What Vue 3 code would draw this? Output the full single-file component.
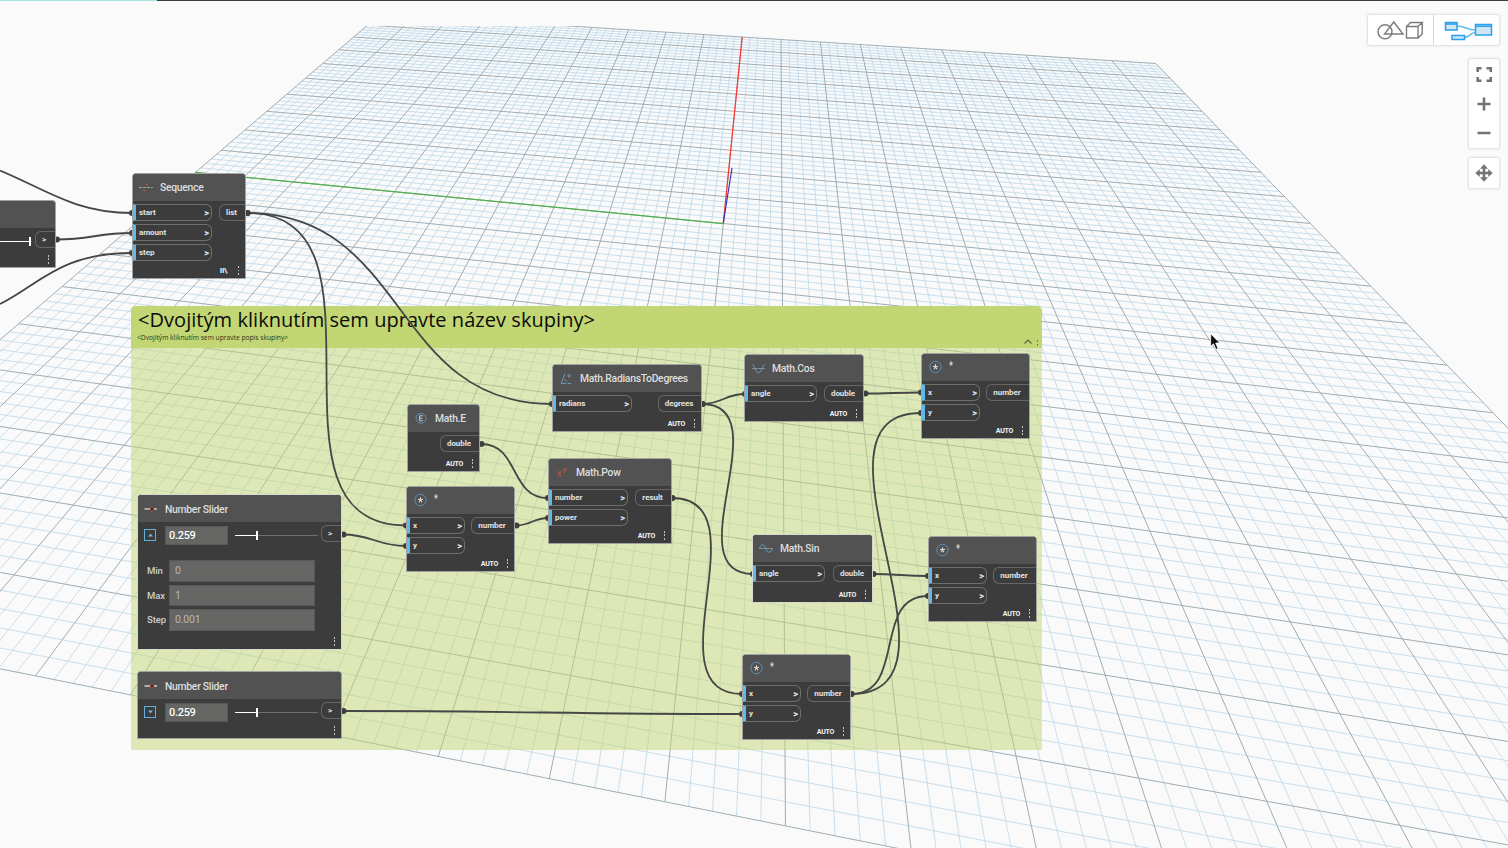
<script setup>
// Camera matrix mapping the ground plane (-10..10 on both axes) to the screen
const cam = [50.8021, 39.90417, 723.3215, 3.353963, -16.75177, 223.5305, -0.01017834, 0.05122718]
function project(u, v) {
  const w = cam[6] * u + cam[7] * v + 1
  return [(cam[0] * u + cam[1] * v + cam[2]) / w, (cam[3] * u + cam[4] * v + cam[5]) / w]
}
function seg(u1, v1, u2, v2) {
  const a = project(u1, v1)
  const b = project(u2, v2)
  return `M${a[0].toFixed(2)} ${a[1].toFixed(2)}L${b[0].toFixed(2)} ${b[1].toFixed(2)}`
}
let minor = ''
let major = ''
for (let i = -50; i <= 50; i++) {
  const t = i / 5
  const d = seg(t, -10, t, 10) + seg(-10, t, 10, t)
  if (i % 5 === 0) major += d
  else minor += d
}

const links = [
  [247, 213, 406, 525.5], [247, 213, 552, 404], [702, 404, 745, 394], [702, 404, 753, 574],
  [481, 444, 548, 498], [516, 525.5, 548, 518], [672, 498, 742, 694], [343, 534.5, 406, 546],
  [343, 711, 742, 714], [865, 393.5, 921, 392.5], [873, 574, 928, 576], [851, 694, 928, 596],
  [851, 694, 921, 413], [56.5, 239.5, 132, 233],
]
function wire([x1, y1, x2, y2]) {
  const k = 0.45 * Math.hypot(x2 - x1, y2 - y1)
  return `M${x1} ${y1}C${x1 + k} ${y1} ${x2 - k} ${y2} ${x2} ${y2}`
}
const wires = [...links.map(wire), 'M0 170.5C45 189 75 213 132 213', 'M0 304C40 284 60 253 132 253']
const plugs = [...links.flatMap(([a, b, c, d]) => [[a + 0.5, b], [c, d]]), [132, 213], [132, 253]]

const nodes = [
  { x: 132, y: 173, w: 114, h: 106, title: 'Sequence', icon: 'seq', ins: ['start', 'amount', 'step'], iw: 79, out: 'list', ow: 26, mode: 'II\\' },
  { x: 407, y: 404, w: 73, h: 68, title: 'Math.E', icon: 'e', ins: [], iw: 0, out: 'double', ow: 39, mode: 'AUTO' },
  { x: 406, y: 486, w: 109, h: 86, title: '*', icon: 'star', ins: ['x', 'y'], iw: 58, out: 'number', ow: 43, mode: 'AUTO' },
  { x: 552, y: 364, w: 150, h: 68, title: 'Math.RadiansToDegrees', icon: 'deg', ins: ['radians'], iw: 79, out: 'degrees', ow: 43, mode: 'AUTO' },
  { x: 744, y: 354, w: 120, h: 68, title: 'Math.Cos', icon: 'cos', ins: ['angle'], iw: 72, out: 'double', ow: 39, mode: 'AUTO' },
  { x: 548, y: 458, w: 124, h: 86, title: 'Math.Pow', icon: 'pow', ins: ['number', 'power'], iw: 79, out: 'result', ow: 36, mode: 'AUTO' },
  { x: 921, y: 353, w: 109, h: 86, title: '*', icon: 'star', ins: ['x', 'y'], iw: 58, out: 'number', ow: 43, mode: 'AUTO' },
  { x: 752, y: 534, w: 121, h: 69, title: 'Math.Sin', icon: 'sin', ins: ['angle'], iw: 72, out: 'double', ow: 39, mode: 'AUTO', bright: true },
  { x: 928, y: 536, w: 109, h: 86, title: '*', icon: 'star', ins: ['x', 'y'], iw: 58, out: 'number', ow: 43, mode: 'AUTO' },
  { x: 742, y: 654, w: 109, h: 86, title: '*', icon: 'star', ins: ['x', 'y'], iw: 58, out: 'number', ow: 43, mode: 'AUTO' },
]
const sliders = [
  { x: -149, y: 200, h: 68, full: true },
  { x: 137, y: 494, h: 156, open: true, bright: true },
  { x: 137, y: 671, h: 68 },
]
const ranges = [['Min', '0'], ['Max', '1'], ['Step', '0.001']]
const place = (n) => ({ left: n.x + 'px', top: n.y + 'px', width: (n.w || 205) + 'px', height: n.h + 'px' })
</script>

<template>
  <div class="workspace">
    <svg class="layer" width="1508" height="848">
      <defs><clipPath id="far"><rect x="0" y="26" width="1508" height="822" /></clipPath></defs>
      <g clip-path="url(#far)" fill="none">
        <path :d="minor" class="minor" />
        <path :d="major" class="major" />
      </g>
      <path :d="seg(0, 0, -10, 0)" stroke="#4fb04c" stroke-width="1.2" />
      <path :d="seg(0, 0, 0, 10)" stroke="#ff3232" stroke-width="1.2" />
      <path d="M723.3 223L732 168" stroke="#2a2ab8" stroke-width="1.1" />
    </svg>

    <section class="group">
      <header class="group-head">
        <div class="group-title">&lt;Dvojitým kliknutím sem upravte název skupiny&gt;</div>
        <div class="group-desc">&lt;Dvojitým kliknutím sem upravte popis skupiny&gt;</div>
        <svg class="group-tools" width="18" height="10" viewBox="0 0 18 10">
          <path d="M.5 6.500L4 3L7.500 6.500" fill="none" stroke="#5c6840" stroke-width="1.200" />
          <path d="M13.500 3v1.500M13.500 7v1.500" stroke="#5c6840" stroke-width="1" />
        </svg>
      </header>
    </section>

    <svg class="layer" width="1508" height="848">
      <path v-for="d in wires" :key="d" :d="d" class="wire" />
      <circle v-for="(p, i) in plugs" :key="i" :cx="p[0]" :cy="p[1]" r="3" fill="#3f3f3f" />
    </svg>

    <article v-for="(n, i) in nodes" :key="i" class="node" :class="{ bright: n.bright }" :style="place(n)">
      <header class="head">
        <svg class="icon" :class="{ raised: n.icon === 'star' || n.icon === 'e' }" width="16" height="16" viewBox="0 0 16 16" fill="none">
          <template v-if="n.icon === 'star'">
            <circle cx="8.500" cy="8" r="5.700" stroke="#5b8fb8" />
            <path d="M8.500 5.300V8M6 7.200L8.500 8L11 7.200M7 10.300L8.500 8L10 10.300" stroke="#e0e0e0" stroke-width="1.100" />
          </template>
          <template v-else-if="n.icon === 'e'">
            <circle cx="8" cy="8.300" r="5" stroke="#5b8fb8" />
            <path d="M10 5.800H6.500v5H10M6.500 8.300h3" stroke="#c8c8c8" />
          </template>
          <template v-else-if="n.icon === 'seq'">
            <path d="M1 7.500h14" stroke="#a0a0a0" stroke-dasharray="3 1" />
            <path d="M8 4.500h2M5.500 10.500h2" stroke="#b85a44" stroke-width="1.400" />
          </template>
          <template v-else-if="n.icon === 'deg'">
            <path d="M7 2.500L3.300 12" stroke="#5b9fd0" />
            <path d="M3 12.500h10" stroke="#5b9fd0" stroke-dasharray="5 1.500" />
            <path d="M7 8l1.500 3" stroke="#808890" />
            <circle cx="11" cy="4.800" r="1.200" stroke="#a0a0a0" stroke-width=".8" />
          </template>
          <template v-else-if="n.icon === 'cos'">
            <path d="M2 7.500h13" stroke="#8a8a8a" />
            <path d="M2.500 3.500C4.500 4 5 11.500 8.500 11.500S12.500 4 14.500 3.500" stroke="#5b9fd0" />
          </template>
          <template v-else-if="n.icon === 'sin'">
            <path d="M1 7.500h14" stroke="#8a8a8a" />
            <path d="M1.500 7.500C3 2.500 6 2.500 7.800 7.500S12.500 12.500 14.500 7.500" stroke="#5b9fd0" />
          </template>
          <template v-else>
            <path d="M3.500 6l4 5.500M7.500 6l-4 5.500" stroke="#b4574c" stroke-width="1.100" />
            <path d="M9 3l1.700 2.800M12.500 3L9.700 8" stroke="#b4574c" stroke-width="1.100" />
          </template>
        </svg>
        <span class="title" :class="{ glyph: n.title === '*' }">{{ n.title }}</span>
      </header>
      <div class="ports">
        <div class="ins">
          <div v-for="p in n.ins" :key="p" class="in" :style="{ width: n.iw + 'px' }"><span>{{ p }}</span><b>&gt;</b></div>
        </div>
        <div class="out" :style="{ width: n.ow + 'px' }">{{ n.out }}</div>
      </div>
      <footer class="foot"><span class="mode" :class="{ lacing: n.icon === 'seq' }">{{ n.mode }}</span><i class="dots"></i></footer>
    </article>

    <article v-for="(s, i) in sliders" :key="'s' + i" class="node" :class="{ bright: s.bright }" :style="place(s)">
      <header class="head">
        <template v-if="!s.full">
          <svg class="icon" width="16" height="16" viewBox="0 0 16 16" fill="none">
            <path d="M1.500 8h12.500" stroke="#d0d0d0" stroke-width="1.300" />
            <circle cx="9" cy="8" r="1.800" fill="#3a2420" stroke="#a84c36" />
          </svg>
          <span class="title low">Number Slider</span>
        </template>
      </header>
      <div class="control">
        <template v-if="!s.full">
          <div class="toggle"><svg width="5" height="4" viewBox="0 0 5 4"><path :d="s.open ? 'M0 3.500L2.500 .5L5 3.500z' : 'M0 .5L2.500 3.500L5 .5z'" fill="#6cb8e4" /></svg></div>
          <div class="value">0.259</div>
        </template>
        <div class="track" :class="{ full: s.full }"><i class="fill"></i><i class="thumb"></i></div>
        <div class="out small">&gt;</div>
      </div>
      <div v-if="s.open" class="ranges">
        <template v-for="r in ranges" :key="r[0]"><span class="label">{{ r[0] }}</span><span class="field">{{ r[1] }}</span></template>
      </div>
      <footer class="foot"><i class="dots"></i></footer>
    </article>

    <div class="topline"></div>

    <aside class="tools">
      <div class="views">
        <div class="view">
          <svg width="50" height="24" viewBox="0 0 50 24" fill="none" stroke="#7c7c7c" stroke-width="1.400">
            <circle cx="9" cy="13.800" r="7" /><path d="M17.800 4L27 16H8.500z" />
            <path d="M30.500 8.500h11.500V20H30.500zM30.500 8.500l4-4h11.700l-4.200 4M46.200 4.500v11.500L42 20" />
          </svg>
        </div>
        <div class="view">
          <svg width="50" height="24" viewBox="0 0 50 24" fill="#cfe6f5" stroke="#2a9fea" stroke-width="1.500">
            <path d="M14 8C22 8 24 12 32 12M21 19.500c6 0 6-5 11-5" fill="none" stroke="#62bced" />
            <path d="M2.500 4.500h11.500v7.500H2.500zM9 17.500h12.500v4H9zM32.500 6.500H48.500v10.500H32.500z" />
            <path d="M2.500 6h11.500M32.500 8.300H48.500" />
          </svg>
        </div>
      </div>
      <div class="zoomer">
        <svg width="30" height="89" viewBox="0 0 30 89" fill="none" stroke="#747474" stroke-width="2.600">
          <path d="M12.500 9.200H8.700V13M17.500 9.200h4.300V13M12.500 21.800H8.700V18M17.500 21.800h4.300V18" />
          <path d="M8.500 45h13M15 38.500v13M8.500 74h13" />
        </svg>
      </div>
      <div class="panner">
        <svg width="30" height="30" viewBox="0 0 30 30" fill="#747474" stroke="#747474">
          <path d="M8 15h14M15 8v14" stroke-width="2.500" />
          <path d="M15 6.500l3.500 4h-7zM15 23.500l3.500-4h-7zM6.500 15l4-3.500v7zM23.500 15l-4-3.500v7z" stroke-width=".5" />
        </svg>
      </div>
    </aside>

    <svg class="cursor" width="12" height="19" viewBox="0 0 12 19"><path d="M.7 .8V13.500L3.500 10.800L6 16.500L8 15.500L5.700 10H9.700z" fill="#0a0a0a" stroke="#fff" stroke-width=".8" /></svg>
  </div>
</template>

<style>
body { background: #fafafa; overflow: hidden; }
</style>

<style scoped>
.workspace { position: relative; width: 1508px; height: 848px; overflow: hidden; background: #fafafa; font-family: Roboto, "Liberation Sans", sans-serif; }
.workspace * { box-sizing: border-box; }
.layer { position: absolute; left: 0; top: 0; }
.minor { stroke: #bfd9ea; stroke-width: .85; }
.major { stroke: #9fadb5; stroke-width: 1; }
.wire { fill: none; stroke: #464646; stroke-width: 1.8; }
.topline { position: absolute; left: 0; top: 0; width: 100%; height: 1px; background: linear-gradient(90deg, #a6e6e0 157px, #3f3f3f 157px); }

.group { position: absolute; left: 131px; top: 306px; width: 911px; height: 444px; border-radius: 5px 5px 0 0; overflow: hidden; background: rgba(194, 214, 113, .5); }
.group-head { position: relative; height: 42px; background: #c2d673; }
.group-title { padding-left: 7px; font: 20px/28px "Open Sans", sans-serif; letter-spacing: .05px; color: #0c0c0c; white-space: nowrap; }
.group-desc { padding-left: 6px; font: 6.700px/8px "Open Sans", sans-serif; color: #2f3418; white-space: nowrap; }
.group-tools { position: absolute; right: 0; bottom: 1px; }

.node { position: absolute; display: flex; flex-direction: column; overflow: hidden; background: #3c3c3c; border: 1px solid #a2a2a2; border-radius: 4px 4px 0 0; color: #e2e2e2; }
.node.bright { border-color: #d8d8cc; }
.head { display: flex; flex: none; align-items: center; height: 27px; padding-left: 5px; background: #525252; }
.icon { flex: none; }
.icon.raised { margin-top: -2px; }
.title { margin: -2px 0 0 6px; font-size: 11.500px; font-weight: 500; line-height: 16px; letter-spacing: -.3px; white-space: nowrap; color: #dedede; transform: scaleX(.9); transform-origin: 0 50%; }
.title.low { margin-top: 0; }
.title.glyph { margin-top: -3px; font-size: 10px; }
.ports { display: flex; justify-content: space-between; align-items: flex-start; flex: none; padding-top: 3px; }
.ins { display: flex; flex-direction: column; gap: 3px; }
.in { display: flex; align-items: center; justify-content: space-between; height: 17px; padding: 0 2px 1px 3px; border: 1px solid #6e6e6a; border-left: 3px solid #62b8ea; border-radius: 0 6px 6px 0; font-size: 8px; font-weight: 700; letter-spacing: -.05px; }
.in b { font-size: 9.500px; }
.out { display: flex; flex: none; align-items: center; justify-content: center; height: 17px; padding-right: 2px; border: 1px solid #666; border-right: 0; border-radius: 6px 0 0 6px; font-size: 8px; font-weight: 700; letter-spacing: -.05px; }
.foot { display: flex; justify-content: flex-end; align-items: center; gap: 9px; height: 15px; margin-top: auto; padding-right: 6px; }
.mode { font-size: 7px; font-weight: 700; letter-spacing: -.3px; color: #f4f4f4; }
.mode.lacing { margin-right: 2px; font-size: 8px; }
.dots { width: 1px; height: 9px; background: repeating-linear-gradient(#c4c4c4 0 2px, transparent 2px 3.500px); }

.control { display: flex; flex: none; align-items: center; height: 24px; padding-left: 6px; }
.toggle { display: flex; align-items: center; justify-content: center; width: 12px; height: 12px; margin-top: 2px; border: 1px solid #62b0dc; }
.value { width: 63px; height: 19px; margin: 3px 0 0 9px; padding-left: 3px; border: 1px solid #585858; background: #656563; font-size: 11px; font-weight: 500; line-height: 17px; letter-spacing: -.3px; color: #fff; }
.track { position: relative; width: 83px; height: 10px; margin: 1px 3px 0 7px; background: linear-gradient(#6e6e6e, #6e6e6e) 0 5px / 100% 1px no-repeat; }
.fill { position: absolute; left: 0; top: 5px; width: 22px; height: 1px; background: #fff; }
.thumb { position: absolute; left: 21px; top: 1px; width: 2px; height: 9px; background: #fff; }
.track.full { margin-left: 91px; }
.full .fill { width: 81px; }
.full .thumb { left: 80px; }
.small { flex: 1; margin-top: -1px; padding-right: 3px; }
.ranges { display: grid; grid-template-columns: 22px 146px; row-gap: 3px; padding: 14px 0 0 9px; }
.label { font-size: 9.500px; font-weight: 500; line-height: 21.500px; letter-spacing: -.1px; color: #cfcfcf; }
.field { height: 21.500px; padding-left: 5px; border: 1px solid #585858; background: #656563; font-size: 10.500px; line-height: 20px; letter-spacing: -.2px; color: #b8b8b8; }

.tools { position: absolute; right: 9px; top: 15px; display: flex; flex-direction: column; align-items: flex-end; }
.views { display: flex; width: 131px; height: 30px; }
.view { display: flex; align-items: center; justify-content: center; width: 66px; padding-bottom: 1px; }
.view + .view { border-left: 1px solid #d8d8d8; padding-left: 2px; }
.views, .zoomer, .panner { background: #fff; border-radius: 2px; box-shadow: 0 0 2px 1px rgba(70, 70, 90, .16); }
.zoomer { width: 30px; height: 89px; margin-top: 14px; }
.panner { width: 30px; height: 30px; margin-top: 10px; }
.tools svg { display: block; }
.cursor { position: absolute; left: 1210px; top: 333px; }
</style>
